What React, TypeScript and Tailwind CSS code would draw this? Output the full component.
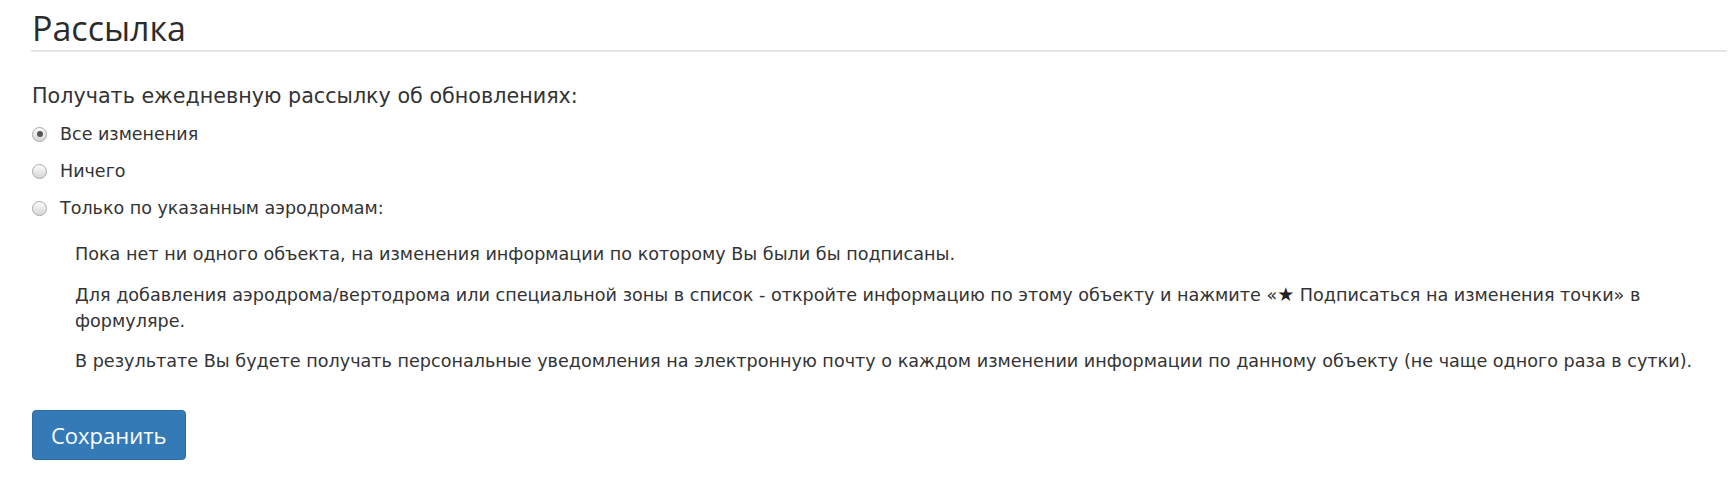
import React from 'react';

const options = [
  { label: 'Все изменения', checked: true },
  { label: 'Ничего', checked: false },
  { label: 'Только по указанным аэродромам:', checked: false },
];

function Radio({ checked }: { checked: boolean }) {
  return (
    <span className="flex h-[15px] w-[15px] shrink-0 items-center justify-center rounded-full border border-[#a9a9a9] bg-linear-to-b from-[#fdfdfd] to-[#d6d6d6]">
      {checked && <span className="h-[6px] w-[6px] rounded-full bg-[#555]" />}
    </span>
  );
}

export default function App() {
  return (
    <div className="min-h-[496px] bg-white pl-[31px] pr-[6px] text-[#333]" style={{ fontFamily: '"DejaVu Sans", Verdana, sans-serif' }}>
      <h2
        className="border-b-2 border-[#e5e5e5] pl-[1px] pt-[10px] pb-[4px] text-[34px] leading-[36px] text-[#2b2b2b]"
        style={{ fontFamily: '"Open Sans", "Noto Sans", sans-serif' }}
      >
        Рассылка
      </h2>

      <div className="pl-[1px] pt-[31px]">
        <p className="text-[20.7px] leading-[26px]">Получать ежедневную рассылку об обновлениях:</p>

        <div className="mt-[12px] flex flex-col gap-[11px]">
          {options.map((o) => (
            <label key={o.label} className="flex items-center gap-[13px] text-[17.5px] leading-[26px]">
              <Radio checked={o.checked} />
              <span>{o.label}</span>
            </label>
          ))}
        </div>

        <div className="mt-[20px] flex flex-col gap-[14px] pl-[43px] text-[17.6px] leading-[26px]">
          <p>Пока нет ни одного объекта, на изменения информации по которому Вы были бы подписаны.</p>
          <p>
            Для добавления аэродрома/вертодрома или специальной зоны в список - откройте информацию по этому объекту и
            нажмите «<span className="text-[19px] text-[#222]">★</span> Подписаться на изменения точки» в
            <br />
            формуляре.
          </p>
          <p>
            В результате Вы будете получать персональные уведомления на электронную почту о каждом изменении информации по
            данному объекту (не чаще одного раза в сутки).
          </p>
        </div>

        <button
          className="mt-[36px] h-[50px] rounded-[4px] border border-[#2e6da4] bg-[#337ab7] px-[18px] text-[22px] text-white"
          style={{ fontFamily: '"Open Sans", "Noto Sans", sans-serif' }}
        >
          Сохранить
        </button>
      </div>
    </div>
  );
}
